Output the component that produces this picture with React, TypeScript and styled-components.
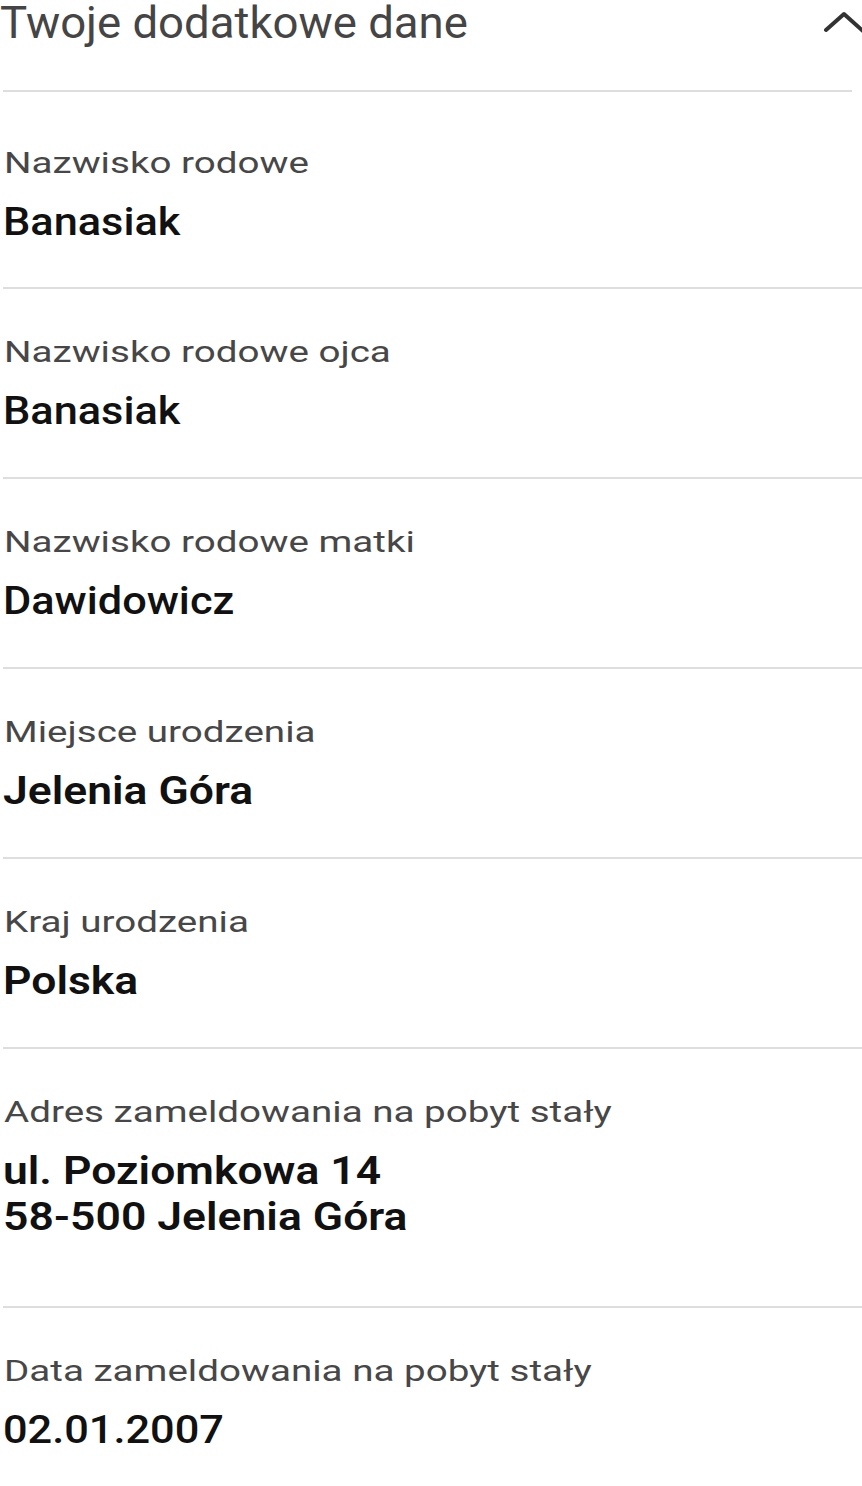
import React from "react";
import styled, { createGlobalStyle } from "styled-components";

type Field = { label: string; value: string[]; strong?: boolean };

const fields: Field[] = [
  { label: "Nazwisko rodowe", value: ["Banasiak"] },
  { label: "Nazwisko rodowe ojca", value: ["Banasiak"] },
  { label: "Nazwisko rodowe matki", value: ["Dawidowicz"] },
  { label: "Miejsce urodzenia", value: ["Jelenia Góra"], strong: true },
  { label: "Kraj urodzenia", value: ["Polska"], strong: true },
  {
    label: "Adres zameldowania na pobyt stały",
    value: ["ul. Poziomkowa 14", "58-500 Jelenia Góra"],
    strong: true,
  },
  { label: "Data zameldowania na pobyt stały", value: ["02.01.2007"] },
];

const GlobalStyle = createGlobalStyle`
  body {
    margin: 0;
    background: #ffffff;
    font-family: Roboto, "Noto Sans", sans-serif;
  }
`;

const Page = styled.div`
  width: 862px;
  height: 1486px;
  overflow: hidden;
  background: #ffffff;
`;

const Header = styled.div`
  display: flex;
  align-items: flex-start;
  justify-content: space-between;
  height: 90px;
`;

const Title = styled.h2`
  margin: 0;
  font-size: 44px;
  font-weight: 400;
  color: #454545;
  line-height: 46px;
  white-space: nowrap;
  transform: scaleX(1.035);
  transform-origin: left center;
`;

const Chevron = styled.svg`
  flex: none;
  margin-right: -4px;
`;

const Rule = styled.div`
  height: 2px;
  margin: 0 10px 0 3px;
  background: #dedede;
`;

const List = styled.div`
  display: flex;
  flex-direction: column;
`;

const Row = styled.div<{ $tall?: boolean; $last?: boolean }>`
  display: flex;
  flex-direction: column;
  align-items: flex-start;
  box-sizing: border-box;
  height: ${(p) => (p.$tall ? 259 : 190)}px;
  padding-top: 52px;
  margin-left: 3px;
  border-bottom: 2px solid ${(p) => (p.$last ? "transparent" : "#dedede")};

  &:first-child {
    height: 197px;
    padding-top: 60px;
  }
`;

const Label = styled.div`
  font-size: 29px;
  line-height: 22px;
  color: #474747;
  white-space: nowrap;
  margin-left: 1px;
  transform: scaleX(1.33);
  transform-origin: left center;
`;

const Value = styled.div<{ $strong?: boolean }>`
  margin-top: 25px;
  font-size: 39px;
  font-weight: ${(p) => (p.$strong ? 600 : 500)};
  line-height: 46px;
  color: #111111;
  white-space: nowrap;
  transform: scaleX(${(p) => (p.$strong ? 1.14 : 1.11)});
  transform-origin: left center;
`;

const Line = styled.div``;

export default function App() {
  return (
    <Page>
      <GlobalStyle />
      <Header>
        <Title>Twoje dodatkowe dane</Title>
        <Chevron width="44" height="36" viewBox="0 0 44 36">
          <polyline
            points="4,30 22,14 41,31"
            fill="none"
            stroke="#333333"
            strokeWidth="4"
            strokeLinecap="round"
            strokeLinejoin="round"
          />
        </Chevron>
      </Header>
      <Rule />
      <List>
        {fields.map((f, i) => (
          <Row key={f.label} $tall={f.value.length > 1} $last={i === fields.length - 1}>
            <Label>{f.label}</Label>
            <Value $strong={f.strong}>
              {f.value.map((v) => (
                <Line key={v}>{v}</Line>
              ))}
            </Value>
          </Row>
        ))}
      </List>
    </Page>
  );
}
